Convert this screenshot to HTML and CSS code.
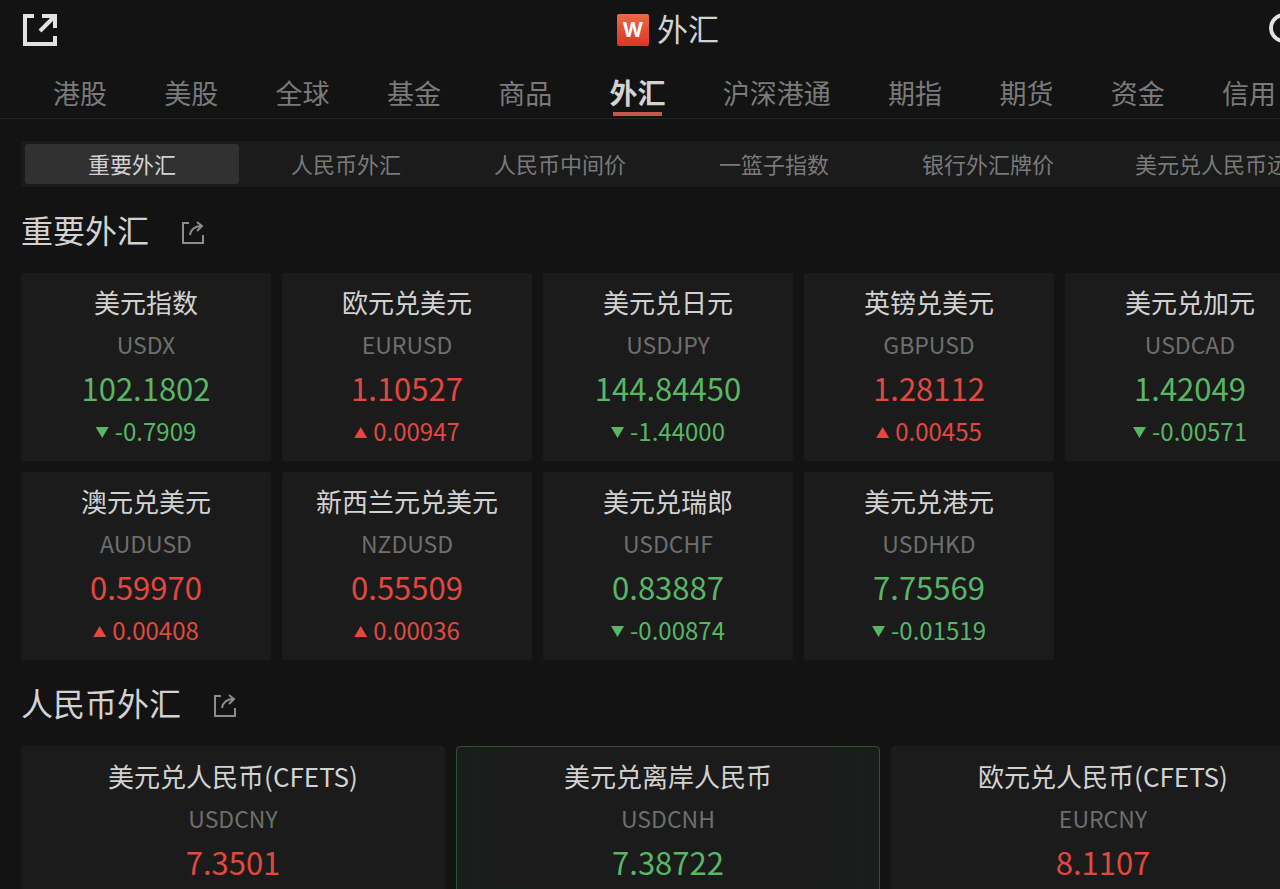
FILE: index.html
```html
<!DOCTYPE html>
<html lang="zh-CN">
<head>
    <meta charset="UTF-8">
    <meta name="viewport" content="width=device-width, initial-scale=1.0">
    <title>外汇</title>
    <link rel="stylesheet" href="styles.css">
</head>
<body>
    <div class="page">
        <header class="header">
            <button class="icon-btn" aria-label="打开">
                <svg width="36" height="34" viewBox="0 0 36 34" fill="none" stroke="#e2e2e2" stroke-width="4">
                    <path d="M12 3H3v28h30v-8"/>
                    <path d="M20 3h13v12M32 4L18 18"/>
                </svg>
            </button>
            <h1 class="title"><span class="logo">W</span><span class="title-text">外汇</span></h1>
            <button class="icon-btn search-btn" aria-label="搜索">
                <svg width="45" height="36" viewBox="0 0 45 36" fill="none" stroke="#e2e2e2" stroke-width="4">
                    <circle cx="15" cy="16" r="13"/>
                    <path d="M25 26l9 8"/>
                </svg>
            </button>
        </header>

        <nav class="tabs">
            <a href="#">港股</a>
            <a href="#">美股</a>
            <a href="#">全球</a>
            <a href="#">基金</a>
            <a href="#">商品</a>
            <a href="#" class="active">外汇</a>
            <a href="#">沪深港通</a>
            <a href="#">期指</a>
            <a href="#">期货</a>
            <a href="#">资金</a>
            <a href="#">信用</a>
        </nav>

        <main class="content">
            <div class="subtabs">
                <button class="active">重要外汇</button>
                <button>人民币外汇</button>
                <button>人民币中间价</button>
                <button>一篮子指数</button>
                <button>银行外汇牌价</button>
                <button>美元兑人民币远期</button>
            </div>

            <section class="section">
                <div class="section-head">
                    <h2>重要外汇</h2>
                    <button class="icon-btn" aria-label="分享重要外汇">
                        <svg width="24" height="24" viewBox="0 0 24 24" fill="none" stroke="#8c8c8c" stroke-width="2">
                            <path d="M8 2H2v20h20v-8"/>
                            <path d="M9 14c1-6 5-9 12-9M16 1l5 4-5 5"/>
                        </svg>
                    </button>
                </div>
                <div class="grid grid-major" id="majorGrid"></div>
            </section>

            <section class="section">
                <div class="section-head">
                    <h2>人民币外汇</h2>
                    <button class="icon-btn" aria-label="分享人民币外汇">
                        <svg width="24" height="24" viewBox="0 0 24 24" fill="none" stroke="#8c8c8c" stroke-width="2">
                            <path d="M8 2H2v20h20v-8"/>
                            <path d="M9 14c1-6 5-9 12-9M16 1l5 4-5 5"/>
                        </svg>
                    </button>
                </div>
                <div class="grid grid-cny" id="cnyGrid"></div>
            </section>
        </main>
    </div>

    <script>
        const major = [
            { name: "美元指数", code: "USDX", price: "102.1802", change: "-0.7909", dir: "down" },
            { name: "欧元兑美元", code: "EURUSD", price: "1.10527", change: "0.00947", dir: "up" },
            { name: "美元兑日元", code: "USDJPY", price: "144.84450", change: "-1.44000", dir: "down" },
            { name: "英镑兑美元", code: "GBPUSD", price: "1.28112", change: "0.00455", dir: "up" },
            { name: "美元兑加元", code: "USDCAD", price: "1.42049", change: "-0.00571", dir: "down" },
            { name: "澳元兑美元", code: "AUDUSD", price: "0.59970", change: "0.00408", dir: "up" },
            { name: "新西兰元兑美元", code: "NZDUSD", price: "0.55509", change: "0.00036", dir: "up" },
            { name: "美元兑瑞郎", code: "USDCHF", price: "0.83887", change: "-0.00874", dir: "down" },
            { name: "美元兑港元", code: "USDHKD", price: "7.75569", change: "-0.01519", dir: "down" }
        ];

        const cny = [
            { name: "美元兑人民币(CFETS)", code: "USDCNY", price: "7.3501", dir: "up" },
            { name: "美元兑离岸人民币", code: "USDCNH", price: "7.38722", dir: "down", flash: true },
            { name: "欧元兑人民币(CFETS)", code: "EURCNY", price: "8.1107", dir: "up" }
        ];

        function renderCards(id, items) {
            document.getElementById(id).innerHTML = items.map(item => `
                <article class="card ${item.dir} ${item.flash ? 'flash' : ''}">
                    <h3 class="name">${item.name}</h3>
                    <div class="code">${item.code}</div>
                    <div class="price">${item.price}</div>
                    ${item.change ? `<div class="change"><i class="arrow"></i>${item.change}</div>` : ''}
                </article>
            `).join('');
        }

        renderCards('majorGrid', major);
        renderCards('cnyGrid', cny);
    </script>
</body>
</html>
```
FILE: styles.css
```css
* {
    margin: 0;
    padding: 0;
    box-sizing: border-box;
}

body {
    height: 100vh;
    overflow: hidden;
    background: #131313;
    color: #d2d2d2;
    font-family: "Noto Sans CJK SC", sans-serif;
}

button {
    border: none;
    background: none;
    color: inherit;
    font-family: inherit;
    cursor: pointer;
}

a {
    color: inherit;
    text-decoration: none;
}

svg {
    display: block;
}

/* the board is a little wider than the window */
.page {
    width: calc(100% + 56px);
}

.header {
    height: 67px;
    padding: 0 22px 8px;
    display: grid;
    grid-template-columns: 1fr auto 1fr;
    align-items: center;
}

.header .icon-btn {
    justify-self: start;
}

.header .search-btn {
    justify-self: end;
}

.title {
    display: flex;
    align-items: center;
    gap: 8px;
    font-size: 31px;
    line-height: 40px;
    font-weight: 400;
}

.title-text {
    padding-bottom: 4px;
}

.logo {
    width: 32px;
    height: 32px;
    border-radius: 2px;
    background: linear-gradient(#ea6a45, #dc3526);
    color: #fff;
    font: bold 20px/32px Inter, sans-serif;
    text-align: center;
}

.tabs {
    height: 52px;
    padding: 0 60px 0 53px;
    display: flex;
    justify-content: space-between;
    border-bottom: 1px solid #252525;
    color: #7a7a7a;
    font-size: 27px;
    line-height: 51px;
    white-space: nowrap;
}

.tabs .active {
    position: relative;
    color: #d2d2d2;
    font-size: 28px;
    font-weight: bold;
}

.tabs .active::after {
    content: '';
    position: absolute;
    left: 4px;
    right: 4px;
    bottom: 2px;
    height: 4px;
    background: #c4564f;
}

.content {
    padding: 22px 21px 0;
}

.subtabs {
    display: flex;
    padding: 3px 4px;
    overflow: hidden;
    border-radius: 4px;
    background: #1b1b1b;
    color: #7a7a7a;
}

.subtabs button {
    flex: none;
    min-width: 214px;
    height: 40px;
    padding: 0 40px 3px;
    border-radius: 3px;
    font-size: 22px;
    white-space: nowrap;
}

.subtabs .active {
    background: #303030;
    color: #d2d2d2;
}

.section {
    padding-top: 4px;
}

.section-head {
    height: 82px;
    display: flex;
    align-items: center;
    gap: 32px;
}

.section-head h2 {
    padding-bottom: 6px;
    font-size: 32px;
    font-weight: 400;
}

.section-head .icon-btn {
    padding-top: 2px;
}

.grid {
    display: grid;
    gap: 11px;
}

.grid-major {
    grid-template-columns: repeat(5, 1fr);
}

.grid-cny {
    grid-template-columns: repeat(3, 1fr);
}

.card {
    min-height: 188px;
    padding: 7px 0 9px;
    border-radius: 2px;
    background: #1b1b1b;
    text-align: center;
    line-height: 43px;
    white-space: nowrap;
}

.grid-cny .card {
    border: 1px solid #1b1b1b;
    border-radius: 4px;
}

.grid-cny .flash {
    border-color: #2c5037;
    background: linear-gradient(90deg, #1a1e1b, #1b1b1b 20%, #1b1b1b 80%, #1a1e1b);
}

.name {
    font-size: 26px;
    font-weight: 400;
}

.code {
    color: #6e6e6e;
    font-size: 23px;
}

.price {
    font-size: 31px;
}

.change {
    display: flex;
    justify-content: center;
    align-items: center;
    gap: 6px;
    font-size: 24px;
}

.up .price,
.up .change {
    color: #e2483f;
}

.down .price,
.down .change {
    color: #57b765;
}

.arrow {
    width: 13px;
    height: 11px;
    margin-top: 4px;
    background: currentColor;
    clip-path: polygon(50% 0, 100% 100%, 0 100%);
}

.down .arrow {
    clip-path: polygon(0 0, 100% 0, 50% 100%);
}
```
